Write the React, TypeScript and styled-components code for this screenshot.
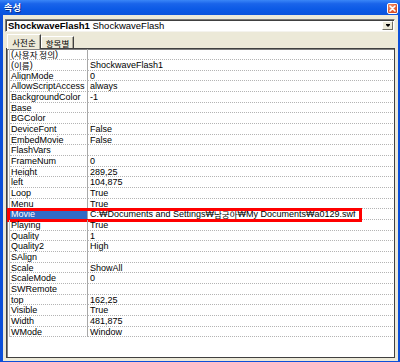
import React from 'react';
import styled, { createGlobalStyle } from 'styled-components';

const GlobalStyle = createGlobalStyle`
    html, body {
        margin: 0;
        padding: 0;
        background: #ffffff;
    }
`;

const FONT = `"Liberation Sans", Arial, "Noto Sans CJK KR", sans-serif`;

const Window = styled.div`
    width: 400px;
    height: 362px;
    display: flex;
    flex-direction: column;
    background: #0c4fd9;
    overflow: hidden;
    font-family: ${FONT};
`;

const TitleBar = styled.div`
    height: 15px;
    flex: none;
    display: flex;
    align-items: center;
    justify-content: space-between;
    padding: 0 2px 0 4px;
    background: linear-gradient(to bottom, #3a86f7 0%, #1a64ea 25%, #0c5ae6 60%, #0a53dc 100%);
`;

const Title = styled.span`
    color: #ffffff;
    font-family: "Noto Sans CJK KR", sans-serif;
    font-weight: 700;
    font-size: 9px;
    line-height: 15px;
    letter-spacing: 0.5px;
    text-shadow: 1px 1px 0 #0a2f8c;
`;

const CloseButton = styled.div`
    width: 11px;
    height: 11px;
    box-sizing: border-box;
    border: 1px solid #ffffff;
    border-radius: 2px;
    background: radial-gradient(circle at 35% 30%, #f29a76 0%, #e0562c 60%, #c23c18 100%);
    display: flex;
    align-items: center;
    justify-content: center;
    margin-top: 1px;
`;

const Body = styled.div`
    flex: 1;
    margin: 0 2px 1px 3px;
    padding: 4px 3px 3px 2px;
    background: #ece9d8;
    display: flex;
    flex-direction: column;
`;

const Combo = styled.div`
    height: 13px;
    flex: none;
    box-sizing: border-box;
    display: flex;
    align-items: center;
    background: #ffffff;
    border-top: 1px solid #7a7a7a;
    border-left: 1px solid #7a7a7a;
    border-right: 1px solid #f4f3ee;
    border-bottom: 1px solid #f4f3ee;
    box-shadow: inset 1px 1px 0 #404040;
    padding: 0 1px 0 2px;
`;

const ComboText = styled.div`
    flex: 1;
    font-size: 9.5px;
    line-height: 11px;
    color: #000000;
    white-space: nowrap;
`;

const Strong = styled.b`
    font-weight: 700;
`;

const DropButton = styled.div`
    width: 11px;
    height: 9px;
    box-sizing: border-box;
    background: #ece9d8;
    border-top: 1px solid #ffffff;
    border-left: 1px solid #ffffff;
    border-right: 1px solid #716f64;
    border-bottom: 1px solid #716f64;
    display: flex;
    align-items: center;
    justify-content: center;
`;

const DropArrow = styled.div`
    width: 0;
    height: 0;
    border-left: 2px solid transparent;
    border-right: 2px solid transparent;
    border-top: 2px solid #000000;
    box-shadow: 0 -1px 0 #000000;
`;

const TabStrip = styled.div`
    height: 15px;
    flex: none;
    margin-top: 1px;
    padding-left: 2px;
    display: flex;
    align-items: flex-end;
`;

const Tab = styled.div<{ $active?: boolean }>`
    box-sizing: border-box;
    height: ${(p) => (p.$active ? 15 : 12)}px;
    width: ${(p) => (p.$active ? 34 : 33)}px;
    border-top: 1px solid #ffffff;
    border-left: 1px solid #ffffff;
    border-right: 1px solid #404040;
    box-shadow: inset -1px 0 0 #aca899;
    display: flex;
    align-items: center;
    justify-content: center;
    font-family: "Noto Sans CJK KR", sans-serif;
    font-size: 8.5px;
    color: #000000;
    line-height: 10px;
    position: relative;
    z-index: ${(p) => (p.$active ? 1 : 0)};
    margin-bottom: ${(p) => (p.$active ? -1 : 0)}px;
    background: #ece9d8;
`;

const GridPanel = styled.div`
    flex: 1;
    margin-left: 1px;
    box-sizing: border-box;
    background: #ffffff;
    border: 1px solid #404040;
    box-shadow: inset 1px 1px 0 #808080;
    padding: 0 1px 0 0;
    overflow: hidden;
`;

const Row = styled.div<{ $h: number }>`
    display: grid;
    grid-template-columns: 3px 78px 1fr;
    height: ${(p) => p.$h}px;
    position: relative;
`;

const Gutter = styled.div`
    border-right: 1px solid #c8c8c8;
`;

const NameCell = styled.div<{ $selected?: boolean }>`
    box-sizing: border-box;
    padding-left: 1px;
    border-right: 1px solid #a8a8a8;
    border-bottom: 1px dotted #b4b4b4;
    background: ${(p) => (p.$selected ? '#316ac5' : 'transparent')};
    color: ${(p) => (p.$selected ? '#ffffff' : '#000000')};
    font-size: 9px;
    line-height: 10px;
    white-space: nowrap;
    overflow: hidden;
`;

const ValueCell = styled.div`
    box-sizing: border-box;
    padding-left: 2px;
    border-bottom: 1px dotted #b4b4b4;
    color: #000000;
    font-size: 9px;
    line-height: 10px;
    white-space: nowrap;
    overflow: hidden;
`;

const Ko = styled.span`
    display: inline-block;
    vertical-align: top;
    font-family: "Noto Sans CJK KR", sans-serif;
    font-size: 8.5px;
    line-height: 10px;
    height: 10px;
`;

const Highlight = styled.div`
    position: absolute;
    left: 0;
    top: -1px;
    width: 355px;
    height: 14px;
    box-sizing: border-box;
    border: 3px solid #ff0000;
    pointer-events: none;
`;

const hangul = /([\uAC00-\uD7A3 ]*[\uAC00-\uD7A3]+)/;

const withKorean = (text: string) =>
    text.split(hangul).map((part, i) => (/[\uAC00-\uD7A3]/.test(part) ? <Ko key={i}>{part}</Ko> : part));

const properties: [string, string][] = [
    ['(사용자 정의)', ''],
    ['(이름)', 'ShockwaveFlash1'],
    ['AlignMode', '0'],
    ['AllowScriptAccess', 'always'],
    ['BackgroundColor', '-1'],
    ['Base', ''],
    ['BGColor', ''],
    ['DeviceFont', 'False'],
    ['EmbedMovie', 'False'],
    ['FlashVars', ''],
    ['FrameNum', '0'],
    ['Height', '289,25'],
    ['left', '104,875'],
    ['Loop', 'True'],
    ['Menu', 'True'],
    ['Movie', 'C:₩Documents and Settings₩남궁아₩My Documents₩a0129.swf'],
    ['Playing', 'True'],
    ['Quality', '1'],
    ['Quality2', 'High'],
    ['SAlign', ''],
    ['Scale', 'ShowAll'],
    ['ScaleMode', '0'],
    ['SWRemote', ''],
    ['top', '162,25'],
    ['Visible', 'True'],
    ['Width', '481,875'],
    ['WMode', 'Window'],
];

const App: React.FunctionComponent = () => {
    return (
        <>
            <GlobalStyle />
            <Window>
                <TitleBar>
                    <Title>속성</Title>
                    <CloseButton>
                        <svg width="7" height="7" viewBox="0 0 7 7">
                            <path d="M1 1 L6 6 M6 1 L1 6" stroke="#ffffff" strokeWidth="1.6" strokeLinecap="round" />
                        </svg>
                    </CloseButton>
                </TitleBar>
                <Body>
                    <Combo>
                        <ComboText>
                            <Strong>ShockwaveFlash1</Strong> ShockwaveFlash
                        </ComboText>
                        <DropButton>
                            <DropArrow />
                        </DropButton>
                    </Combo>
                    <TabStrip>
                        <Tab $active>사전순</Tab>
                        <Tab>항목별</Tab>
                    </TabStrip>
                    <GridPanel>
                        {properties.map(([name, value], index) => {
                            const selected = name === 'Movie';
                            return (
                                <Row key={`prop-${index}`} $h={index % 3 === 2 ? 10 : 11}>
                                    <Gutter />
                                    <NameCell $selected={selected}>{withKorean(name)}</NameCell>
                                    <ValueCell>{withKorean(value)}</ValueCell>
                                    {selected && <Highlight />}
                                </Row>
                            );
                        })}
                    </GridPanel>
                </Body>
            </Window>
        </>
    );
};

export default App;
